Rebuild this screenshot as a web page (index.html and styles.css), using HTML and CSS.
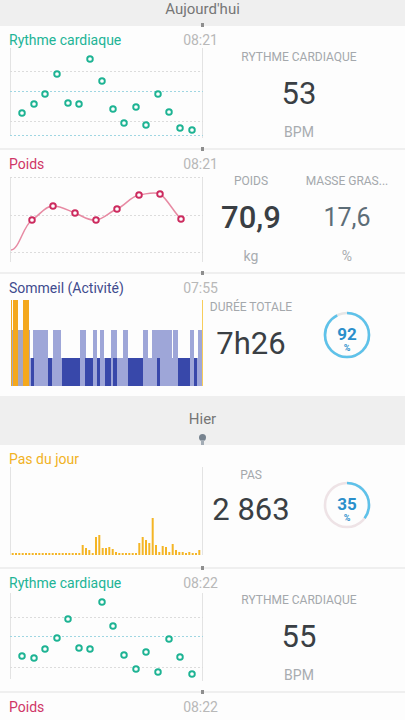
FILE: index.html
```html
<!DOCTYPE html>
<html lang="fr">
<head>
<meta charset="utf-8">
<title>Tableau de bord</title>
<link rel="stylesheet" href="styles.css">
</head>
<body>
<div class="feed">
  <div class="day day--today"><span>Aujourd'hui</span></div>

  <section class="card">
    <div class="card-left">
      <div class="card-head"><h2 class="title title--heart">Rythme cardiaque</h2><span class="time">08:21</span></div>
      <svg class="chart" width="193" height="88" viewBox="0 0 193 88">
        <line class="frame" x1="0.5" y1="-2" x2="0.5" y2="86"/>
        <line class="frame" x1="192.5" y1="-2" x2="192.5" y2="88"/>
        <line class="grid" x1="0" y1="21.5" x2="193" y2="21.5"/>
        <line class="grid grid--accent" x1="0" y1="41.5" x2="193" y2="41.5"/>
        <line class="grid" x1="0" y1="71.5" x2="193" y2="71.5"/>
        <line class="grid grid--accent" x1="0" y1="85.5" x2="193" y2="85.5"/>
        <g class="dots dots--heart">
          <circle cx="12" cy="63" r="2.8"/><circle cx="24" cy="54" r="2.8"/><circle cx="35" cy="44" r="2.8"/><circle cx="47" cy="24" r="2.8"/>
          <circle cx="58" cy="53" r="2.8"/><circle cx="69" cy="54" r="2.8"/><circle cx="80" cy="9" r="2.8"/><circle cx="92" cy="31" r="2.8"/>
          <circle cx="103" cy="59" r="2.8"/><circle cx="114" cy="73" r="2.8"/><circle cx="126" cy="57" r="2.8"/><circle cx="136" cy="75" r="2.8"/>
          <circle cx="148" cy="44" r="2.8"/><circle cx="159" cy="62" r="2.8"/><circle cx="170" cy="78" r="2.8"/><circle cx="182" cy="80" r="2.8"/>
        </g>
      </svg>
    </div>
    <div class="card-right card-right--single">
      <div class="stat">
        <div class="stat-label">Rythme cardiaque</div>
        <div class="stat-value">53</div>
        <div class="stat-unit">BPM</div>
      </div>
    </div>
  </section>

  <section class="card">
    <div class="card-left">
      <div class="card-head"><h2 class="title title--weight">Poids</h2><span class="time">08:21</span></div>
      <svg class="chart" width="193" height="88" viewBox="0 0 193 88">
        <line class="frame" x1="0.5" y1="3" x2="0.5" y2="88"/>
        <line class="frame" x1="192.5" y1="3" x2="192.5" y2="88"/>
        <line class="grid" x1="0" y1="3.5" x2="193" y2="3.5"/>
        <line class="grid" x1="0" y1="41.5" x2="193" y2="41.5"/>
        <line class="grid" x1="0" y1="78.5" x2="193" y2="78.5"/>
        <path class="curve" d="M1,76 C9,76 13,52 22,46 S35,32 43,32 S57,36 65,39 S78,47 86,46 S99,38 107,35 S121,22 129,21 S144,17 150,20 S165,40 171,45"/>
        <g class="dots dots--weight">
          <circle cx="22" cy="46" r="2.8"/><circle cx="43" cy="32" r="2.8"/><circle cx="65" cy="39" r="2.8"/><circle cx="86" cy="46" r="2.8"/>
          <circle cx="107" cy="35" r="2.8"/><circle cx="129" cy="21" r="2.8"/><circle cx="150" cy="20" r="2.8"/><circle cx="171" cy="45" r="2.8"/>
        </g>
      </svg>
    </div>
    <div class="card-right card-right--double">
      <div class="stat">
        <div class="stat-label">Poids</div>
        <div class="stat-value stat-value--strong">70,9</div>
        <div class="stat-unit">kg</div>
      </div>
      <div class="stat">
        <div class="stat-label">Masse gras...</div>
        <div class="stat-value stat-value--muted">17,6</div>
        <div class="stat-unit">%</div>
      </div>
    </div>
  </section>

  <section class="card">
    <div class="card-left">
      <div class="card-head"><h2 class="title title--sleep">Sommeil (Activité)</h2><span class="time">07:55</span></div>
      <svg class="chart" width="193" height="88" viewBox="0 0 193 88">
        <rect class="sl-light" x="20" y="60" width="172" height="28"/>
        <g class="sl-light">
          <rect x="23" y="32" width="15" height="56"/><rect x="43" y="32" width="8" height="56"/>
          <rect x="70" y="32" width="6" height="56"/><rect x="83" y="32" width="4" height="56"/>
          <rect x="90" y="32" width="4" height="56"/><rect x="101" y="32" width="6" height="56"/>
          <rect x="113" y="32" width="5" height="56"/><rect x="133" y="32" width="5" height="56"/>
          <rect x="142" y="32" width="20" height="56"/><rect x="163" y="32" width="5" height="56"/>
          <rect x="180" y="32" width="4" height="56"/><rect x="188" y="32" width="4" height="56"/>
        </g>
        <g class="sl-deep">
          <rect x="21" y="60" width="3" height="28"/><rect x="38" y="60" width="4" height="28"/>
          <rect x="52" y="60" width="18" height="28"/><rect x="75" y="60" width="8" height="28"/>
          <rect x="87" y="60" width="3" height="28"/><rect x="95" y="60" width="6" height="28"/>
          <rect x="103" y="60" width="4" height="28"/><rect x="118" y="60" width="15" height="28"/>
          <rect x="147" y="60" width="3" height="28"/><rect x="168" y="60" width="12" height="28"/>
          <rect x="184" y="60" width="3" height="28"/>
        </g>
        <rect class="sl-gray" x="2" y="32" width="18" height="56"/>
        <g class="sl-awake">
          <rect x="1" y="2" width="1" height="86"/>
          <rect x="3" y="2" width="5" height="86"/>
          <rect x="13" y="2" width="6" height="86"/>
        </g>
        <rect class="sl-end" x="192" y="2" width="1" height="86"/>
      </svg>
    </div>
    <div class="card-right card-right--double">
      <div class="stat">
        <div class="stat-label stat-label--low">Durée totale</div>
        <div class="stat-value">7h26</div>
      </div>
      <div class="stat">
        <div class="ring ring--sleep">
          <svg width="50" height="50" viewBox="0 0 50 50">
            <circle class="ring-track" cx="25" cy="25" r="22"/>
            <circle class="ring-bar" cx="25" cy="25" r="22" stroke-dasharray="127.2 138.3" transform="rotate(-90 25 25)"/>
          </svg>
          <div class="ring-text"><span class="ring-num">92</span><span class="ring-pct">%</span></div>
        </div>
      </div>
    </div>
  </section>

  <div class="day day--yesterday"><span>Hier</span></div>

  <section class="card card--nomark card--steps">
    <div class="card-left">
      <div class="card-head"><h2 class="title title--steps">Pas du jour</h2></div>
      <svg class="chart" width="193" height="88" viewBox="0 0 193 88">
        <line class="frame" x1="0.5" y1="-2" x2="0.5" y2="86"/>
        <line class="frame" x1="192.5" y1="-2" x2="192.5" y2="86"/>
        <g class="bars">
          <rect x="1.7" y="84" width="2" height="2"/><rect x="5" y="84" width="2" height="2"/><rect x="8.3" y="84" width="2" height="2"/>
          <rect x="11.7" y="84" width="2" height="2"/><rect x="15" y="84" width="2" height="2"/><rect x="18.3" y="84" width="2" height="2"/>
          <rect x="21.7" y="84" width="2" height="2"/><rect x="25" y="84" width="2" height="2"/><rect x="28.3" y="84" width="2" height="2"/>
          <rect x="31.7" y="84" width="2" height="2"/><rect x="35" y="84" width="2" height="2"/><rect x="38.3" y="84" width="2" height="2"/>
          <rect x="41.7" y="84" width="2" height="2"/><rect x="45" y="84" width="2" height="2"/><rect x="48.3" y="84" width="2" height="2"/>
          <rect x="51.7" y="84" width="2" height="2"/><rect x="55" y="84" width="2" height="2"/><rect x="58.3" y="84" width="2" height="2"/>
          <rect x="61.7" y="84" width="2" height="2"/><rect x="65" y="84" width="2" height="2"/><rect x="68.3" y="84" width="2" height="2"/>
          <rect x="71.7" y="76" width="2" height="10"/><rect x="75" y="79" width="2" height="7"/><rect x="78.3" y="81" width="2" height="5"/>
          <rect x="81.7" y="84" width="2" height="2"/><rect x="85" y="68" width="2" height="18"/><rect x="88.3" y="66" width="2" height="20"/>
          <rect x="91.7" y="79" width="2" height="7"/><rect x="95" y="79" width="2" height="7"/><rect x="98.3" y="78" width="2" height="8"/>
          <rect x="101.7" y="80" width="2" height="6"/><rect x="105" y="83" width="2" height="3"/><rect x="108.3" y="84" width="2" height="2"/>
          <rect x="111.7" y="84" width="2" height="2"/><rect x="115" y="84" width="2" height="2"/><rect x="118.3" y="84" width="2" height="2"/>
          <rect x="121.7" y="84" width="2" height="2"/><rect x="125" y="84" width="2" height="2"/><rect x="128.3" y="74" width="2" height="12"/>
          <rect x="131.7" y="68" width="2" height="18"/><rect x="135" y="71" width="2" height="15"/><rect x="138.3" y="74" width="2" height="12"/>
          <rect x="141.7" y="49" width="2" height="37"/><rect x="145" y="76" width="2" height="10"/><rect x="148.3" y="83" width="2" height="3"/>
          <rect x="151.7" y="77" width="2" height="9"/><rect x="155" y="78" width="2" height="8"/><rect x="158.3" y="83" width="2" height="3"/>
          <rect x="161.7" y="75" width="2" height="11"/><rect x="165" y="81" width="2" height="5"/><rect x="168.3" y="83" width="2" height="3"/>
          <rect x="171.7" y="83" width="2" height="3"/><rect x="175" y="84" width="2" height="2"/><rect x="178.3" y="83" width="2" height="3"/>
          <rect x="181.7" y="84" width="2" height="2"/><rect x="185" y="84" width="2" height="2"/><rect x="188.3" y="81" width="2" height="5"/>
        </g>
      </svg>
    </div>
    <div class="card-right card-right--double">
      <div class="stat">
        <div class="stat-label stat-label--high">Pas</div>
        <div class="stat-value stat-value--high">2 863</div>
      </div>
      <div class="stat">
        <div class="ring ring--steps">
          <svg width="50" height="50" viewBox="0 0 50 50">
            <circle class="ring-track ring-track--pink" cx="25" cy="25" r="22"/>
            <circle class="ring-bar" cx="25" cy="25" r="22" stroke-dasharray="48.4 138.3" transform="rotate(-90 25 25)"/>
          </svg>
          <div class="ring-text"><span class="ring-num">35</span><span class="ring-pct">%</span></div>
        </div>
      </div>
    </div>
  </section>

  <section class="card">
    <div class="card-left">
      <div class="card-head"><h2 class="title title--heart">Rythme cardiaque</h2><span class="time">08:22</span></div>
      <svg class="chart" width="193" height="88" viewBox="0 0 193 88">
        <line class="frame" x1="0.5" y1="0" x2="0.5" y2="86"/>
        <line class="frame" x1="192.5" y1="0" x2="192.5" y2="88"/>
        <line class="grid" x1="0" y1="24.5" x2="193" y2="24.5"/>
        <line class="grid grid--accent" x1="0" y1="43.5" x2="193" y2="43.5"/>
        <line class="grid" x1="0" y1="74.5" x2="193" y2="74.5"/>
        <g class="dots dots--heart">
          <circle cx="12" cy="63" r="2.8"/><circle cx="24" cy="65" r="2.8"/><circle cx="35" cy="56" r="2.8"/><circle cx="47" cy="45" r="2.8"/>
          <circle cx="58" cy="26" r="2.8"/><circle cx="69" cy="55" r="2.8"/><circle cx="80" cy="56" r="2.8"/><circle cx="92" cy="9" r="2.8"/>
          <circle cx="103" cy="33" r="2.8"/><circle cx="114" cy="62" r="2.8"/><circle cx="126" cy="76" r="2.8"/><circle cx="136" cy="59" r="2.8"/>
          <circle cx="148" cy="79" r="2.8"/><circle cx="159" cy="46" r="2.8"/><circle cx="170" cy="64" r="2.8"/><circle cx="182" cy="81" r="2.8"/>
        </g>
      </svg>
    </div>
    <div class="card-right card-right--single">
      <div class="stat">
        <div class="stat-label">Rythme cardiaque</div>
        <div class="stat-value">55</div>
        <div class="stat-unit">BPM</div>
      </div>
    </div>
  </section>

  <section class="card">
    <div class="card-left">
      <div class="card-head"><h2 class="title title--weight">Poids</h2><span class="time">08:22</span></div>
    </div>
    <div class="card-right"></div>
  </section>
</div>
</body>
</html>
```

FILE: styles.css
```css
html, body {
  margin: 0;
  padding: 0;
}
body {
  background: #efefef;
  font-family: Roboto, "Noto Sans", "Liberation Sans", sans-serif;
  overflow: hidden;
}
.feed {
  width: 405px;
}
.day {
  position: relative;
  text-align: center;
  color: #767676;
  font-size: 15px;
  line-height: 18px;
}
.day--today {
  height: 26px;
}
.day--yesterday {
  height: 49px;
  box-sizing: border-box;
  padding-top: 14px;
}
.day--yesterday::before {
  content: "";
  position: absolute;
  left: 199px;
  top: 38px;
  width: 7px;
  height: 7px;
  border-radius: 50%;
  background: #77838f;
}
.day--yesterday::after {
  content: "";
  position: absolute;
  left: 201px;
  top: 44px;
  width: 3px;
  height: 5px;
  background: #a3acb5;
}
.card {
  position: relative;
  display: grid;
  grid-template-columns: 203px 1fr;
  height: 122px;
  background: #fdfdfd;
  margin-top: 2px;
  overflow: visible;
}
.day + .card {
  margin-top: 0;
}
.card::before {
  content: "";
  position: absolute;
  left: 201px;
  top: -3px;
  width: 3px;
  height: 4px;
  background: #8e8e8e;
}
.card--nomark::before {
  display: none;
}
.card-left {
  padding-left: 10px;
  min-width: 0;
}
.card-head {
  display: flex;
  justify-content: space-between;
  align-items: flex-start;
  height: 24px;
}
.title {
  margin: 0 0 0 -1px;
  padding-top: 6px;
  font-size: 14px;
  font-weight: 400;
  line-height: 16px;
  white-space: nowrap;
}
.title--heart { color: #22b496; }
.title--weight { color: #cf3566; }
.title--sleep { color: #3f4b8e; }
.title--steps { color: #f1b224; }
.time {
  padding-top: 6px;
  margin-right: -15px;
  font-size: 14px;
  line-height: 16px;
  color: #b8b8b8;
}
.chart {
  display: block;
  overflow: visible;
}
.frame {
  stroke: #e3e3e3;
  stroke-width: 1;
}
.grid {
  stroke: #dcdcdc;
  stroke-width: 1;
  stroke-dasharray: 2 2;
}
.grid--accent {
  stroke: #9fd6e2;
}
.dots circle {
  fill: #ffffff;
  stroke-width: 1.9;
}
.dots--heart circle { stroke: #1db393; }
.dots--weight circle { stroke: #cc2a5e; }
.curve {
  fill: none;
  stroke: #e78aa3;
  stroke-width: 1.5;
}
.sl-light, .sl-light rect { fill: #9ea6d8; }
.sl-deep rect { fill: #3848aa; }
.sl-gray { fill: #a6a6c2; }
.sl-awake rect { fill: #f4a81c; }
.sl-end { fill: #f7cd5a; }
.bars rect { fill: #f4b526; }

.card-right {
  display: grid;
  padding-right: 10px;
  min-width: 0;
}
.card-right--single {
  grid-template-columns: 1fr;
}
.card-right--double {
  grid-template-columns: 1fr 1fr;
}
.stat {
  display: flex;
  flex-direction: column;
  align-items: center;
  min-width: 0;
}
.stat-label {
  margin-top: 24px;
  font-size: 12px;
  line-height: 14px;
  color: #a4a8ac;
  text-transform: uppercase;
  white-space: nowrap;
}
.stat-label--low {
  margin-top: 26px;
}
.stat-label--high {
  margin-top: 23px;
}
.stat-value {
  margin-top: 12px;
  font-size: 31px;
  line-height: 36px;
  color: #3a3f44;
  white-space: nowrap;
}
.stat-value--high {
  margin-top: 10px;
}
.stat-value--strong {
  font-weight: 500;
}
.stat-value--muted {
  font-size: 25px;
  color: #5d6d77;
}
.stat-unit {
  margin-top: 12px;
  font-size: 14px;
  line-height: 16px;
  color: #a8acb0;
}
.ring {
  position: relative;
  width: 50px;
  height: 50px;
}
.ring--sleep { margin-top: 36px; }
.ring--steps { margin-top: 35px; }
.ring svg {
  display: block;
}
.ring-track {
  fill: none;
  stroke: #e6e6e6;
  stroke-width: 2.6;
}
.ring-track--pink {
  stroke: #eee3e6;
}
.ring-bar {
  fill: none;
  stroke: #5ec2ea;
  stroke-width: 2.6;
}
.ring-text {
  position: absolute;
  inset: 0;
  display: flex;
  flex-direction: column;
  align-items: center;
  padding-top: 15px;
  box-sizing: border-box;
}
.ring-num {
  font-size: 17px;
  font-weight: 700;
  line-height: 18px;
  color: #2a8fcb;
}
.ring-pct {
  font-size: 9px;
  line-height: 10px;
  font-weight: 700;
  color: #2a8fcb;
}
```
